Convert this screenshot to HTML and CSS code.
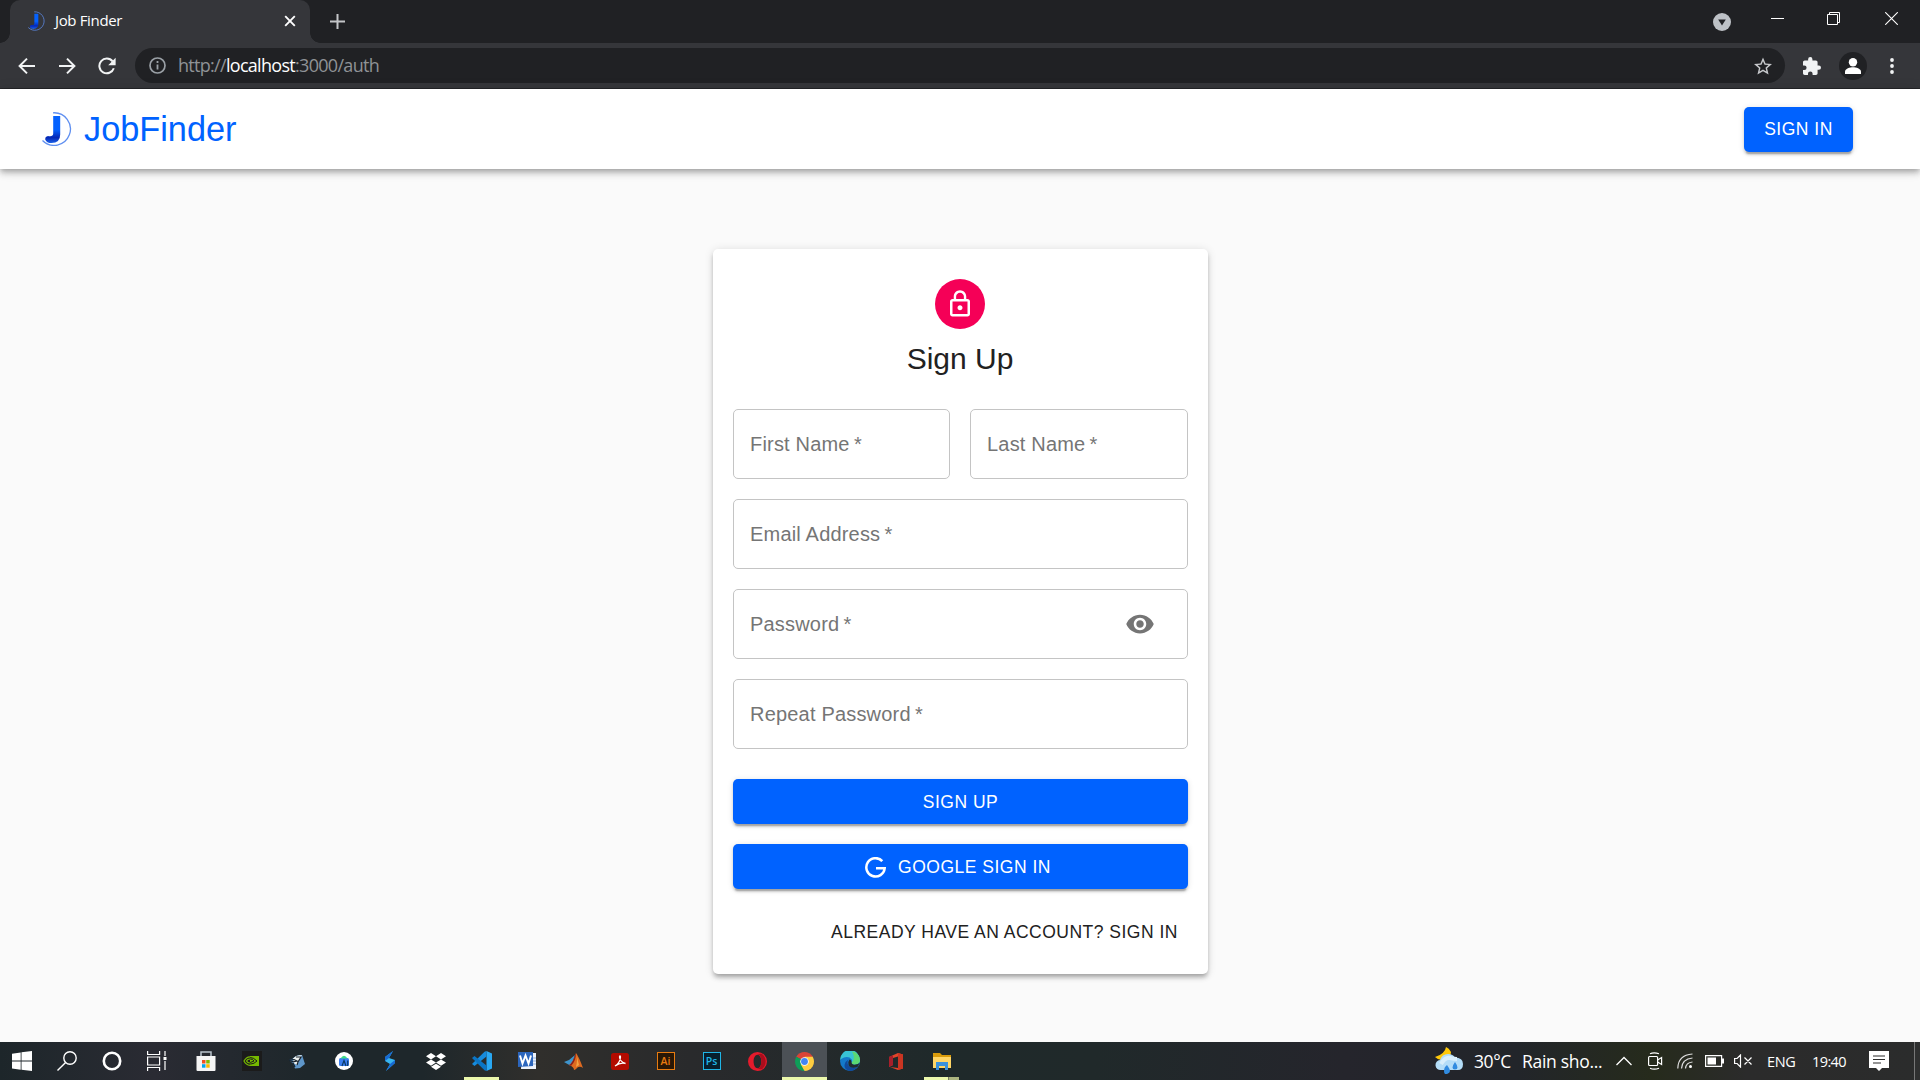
FILE: index.html
```html
<!DOCTYPE html>
<html lang="en">
<head>
<meta charset="utf-8">
<title>Job Finder</title>
<link rel="stylesheet" href="styles.css">
</head>
<body>
<svg width="0" height="0" class="defs">
  <defs>
    <linearGradient id="jg" x1="0" y1="0" x2="0" y2="1"><stop offset=".5" stop-color="#0562ff"/><stop offset=".8" stop-color="#0527b5"/><stop offset="1" stop-color="#1c62e8"/></linearGradient>
    <symbol id="logo" viewBox="0 0 30 34">
      <path d="M11 .8A16.300 16.300 0 1 1 .5 28.500" fill="none" stroke="#5f8ff0" stroke-width="1.300"/>
      <path d="M11.200 4h7v18.500q0 8.500-8.700 8.500-5 0-6.300-3.600 0-2.900 2.800-3.400 5.200 1 5.200-2.500z" fill="url(#jg)"/>
    </symbol>
  </defs>
</svg>

<div class="tabs">
  <div class="tab">
    <svg class="fav" width="17" height="20"><use href="#logo"/></svg>
    <span class="tab-title">Job Finder</span>
    <svg width="12" height="12" viewBox="0 0 12 12"><path d="M1.2 1.2l9.6 9.6M10.8 1.2L1.2 10.8" stroke="#fff" stroke-width="1.9"/></svg>
  </div>
  <svg class="plus" width="15" height="15" viewBox="0 0 15 15"><path d="M7.5 0v15M0 7.5h15" stroke="#c3c5c8" stroke-width="2"/></svg>
  <div class="window-buttons">
    <svg class="down" width="18" height="18" viewBox="0 0 18 18"><circle cx="9" cy="9" r="9" fill="#bdc1c6"/><path d="M5.2 6.5h7.6L9 12.6z" fill="#202124"/></svg>
    <svg class="min" width="13" height="13" viewBox="0 0 13 13"><path d="M0 6.5h13" stroke="#fff"/></svg>
    <svg class="max" width="13" height="13" viewBox="0 0 13 13" fill="none" stroke="#fff"><path d="M.5 2.5h10v10H.5zM2.5 2V.5h10v10H11"/></svg>
    <svg width="13" height="13" viewBox="0 0 13 13"><path d="M.2.2l12.6 12.6M12.8.2L.2 12.8" stroke="#fff" stroke-width="1.1"/></svg>
  </div>
</div>

<div class="toolbar">
  <svg class="nav" width="18" height="18" viewBox="0 0 18 18" fill="none" stroke="#f1f3f4" stroke-width="2"><path d="M17 9H2.5M9 1.6L1.6 9 9 16.4"/></svg>
  <svg class="nav" width="18" height="18" viewBox="0 0 18 18" fill="none" stroke="#f1f3f4" stroke-width="2"><path d="M1 9h14.5M9 1.6L16.4 9 9 16.4"/></svg>
  <svg class="nav" width="18" height="18" viewBox="0 0 18 18"><path d="M15.800 11.200A7.400 7.400 0 1 1 14.600 4.300" fill="none" stroke="#f1f3f4" stroke-width="2"/><path d="M17.600.8v7.400h-7.400z" fill="#f1f3f4"/></svg>
  <div class="omnibox">
    <svg width="17" height="17" viewBox="0 0 17 17"><circle cx="8.500" cy="8.500" r="7.500" fill="none" stroke="#9aa0a6" stroke-width="1.7"/><path d="M8.500 7.500v5M8.500 4v2" stroke="#9aa0a6" stroke-width="1.8"/></svg>
    <span class="url">http://<b>localhost</b>:3000/auth</span>
    <svg width="18" height="18" viewBox="2 2 20 19"><path fill="#c6c8cb" d="M22 9.240l-7.190-.620L12 2 9.190 8.630 2 9.240l5.460 4.730L5.820 21 12 17.270 18.180 21l-1.630-7.030L22 9.240zM12 15.400l-3.760 2.270 1-4.280-3.320-2.880 4.380-.380L12 6.100l1.710 4.040 4.380.380-3.320 2.880 1 4.280L12 15.400z"/></svg>
  </div>
  <svg class="ext" width="18" height="18" viewBox="2 1 21 21"><path fill="#f1f3f4" d="M20.500 11H19V7c0-1.100-.9-2-2-2h-4V3.500a2.500 2.500 0 0 0-5 0V5H4c-1.100 0-2 .9-2 2v3.800h1.500a2.700 2.700 0 0 1 0 5.400H2V20c0 1.100.9 2 2 2h3.800v-1.500a2.700 2.700 0 0 1 5.400 0V22H17c1.100 0 2-.9 2-2v-4h1.500a2.500 2.500 0 0 0 0-5z"/></svg>
  <svg class="user" width="28" height="28" viewBox="0 0 28 28"><circle cx="14" cy="14" r="14" fill="#202124"/><circle cx="14" cy="10.200" r="4.200" fill="#fff"/><path d="M6 22v-2.500c0-2.700 5-4.200 8-4.200s8 1.500 8 4.200V22z" fill="#fff"/></svg>
  <svg width="4" height="16" viewBox="0 0 4 16" fill="#f1f3f4"><circle cx="2" cy="2" r="1.900"/><circle cx="2" cy="8" r="1.900"/><circle cx="2" cy="14" r="1.900"/></svg>
</div>

<header class="appbar">
  <svg width="30" height="34"><use href="#logo"/></svg>
  <span class="brand">JobFinder</span>
  <button class="btn signin">SIGN IN</button>
</header>

<main class="page">
  <form class="card">
    <div class="avatar"><svg width="30" height="30" viewBox="0 0 24 24" fill="#fff"><path d="M12 17c1.100 0 2-.9 2-2s-.9-2-2-2-2 .9-2 2 .9 2 2 2zm6-9h-1V6c0-2.760-2.240-5-5-5S7 3.240 7 6v2H6c-1.100 0-2 .9-2 2v10c0 1.100.9 2 2 2h12c1.100 0 2-.9 2-2V10c0-1.100-.9-2-2-2zM8.900 6c0-1.710 1.390-3.100 3.100-3.100s3.100 1.390 3.100 3.100v2H8.900V6zM18 20H6V10h12v10z"/></svg></div>
    <h1>Sign Up</h1>
    <div class="fields">
      <label class="field">First Name&thinsp;*</label>
      <label class="field">Last Name&thinsp;*</label>
      <label class="field wide">Email Address&thinsp;*</label>
      <label class="field wide">Password&thinsp;*
        <svg width="30" height="30" viewBox="0 0 24 24"><path fill="#757575" d="M12 4.500C7 4.500 2.730 7.610 1 12c1.730 4.390 6 7.500 11 7.500s9.270-3.110 11-7.500c-1.730-4.390-6-7.500-11-7.500zM12 17c-2.760 0-5-2.240-5-5s2.240-5 5-5 5 2.240 5 5-2.240 5-5 5zm0-8c-1.660 0-3 1.340-3 3s1.340 3 3 3 3-1.340 3-3-1.340-3-3-3z"/></svg>
      </label>
      <label class="field wide">Repeat Password&thinsp;*</label>
    </div>
    <button class="btn submit">SIGN UP</button>
    <button class="btn google"><svg width="21" height="21" viewBox="0 0 21 21"><path d="M17.300 4.100A9.200 9.200 0 1 0 19.700 11.200H11" fill="none" stroke="#fff" stroke-width="2.500"/></svg>GOOGLE SIGN IN</button>
    <a class="switch">ALREADY HAVE AN ACCOUNT? SIGN IN</a>
  </form>
</main>

<footer class="taskbar">
  <div class="sys"><svg width="20" height="20" viewBox="0 0 20 20" fill="#fff"><path d="M0 2.700L8.700 1.400v8.200H0zM9.500 1.300L20 0v9.600H9.500zM0 10.400h8.700v8.300L0 17.500zM9.500 10.400H20V20L9.500 18.800z"/></svg></div>
  <div class="sys"><svg width="20" height="20" viewBox="0 0 20 20" fill="none" stroke="#fff" stroke-width="1.400"><circle cx="13" cy="7" r="6.200"/><path d="M8.600 11.400L.5 19.500"/></svg></div>
  <div class="sys"><svg width="20" height="20" viewBox="0 0 20 20"><circle cx="10" cy="10" r="8.200" fill="none" stroke="#fff" stroke-width="2.600"/></svg></div>
  <div class="sys"><svg width="20" height="20" viewBox="0 0 20 20" fill="none" stroke="#fff" stroke-width="1.200"><path d="M.6 0v3.500h12V0M.6 20v-3.500h12V20M.6 6h12v8H.6zM18 0v5M18 10v9"/><path d="M16.500 6h3v3h-3z" fill="#fff" stroke="none"/></svg></div>
  <div class="apps">
    <div class="app"><svg width="20" height="20" viewBox="0 0 20 20"><path d="M5 6V1h10v5" fill="none" stroke="#b9c3cc" stroke-width="1.500"/><path d="M.5 5h19v14q0 1-1 1h-17q-1 0-1-1z" fill="#f5f5f5"/><path d="M6 9h3.500v3.500H6z" fill="#f25022"/><path d="M10.200 9h3.500v3.500h-3.500z" fill="#7fba00"/><path d="M6 13.200h3.500v3.500H6z" fill="#00a4ef"/><path d="M10.200 13.200h3.500v3.500h-3.500z" fill="#ffb900"/></svg></div>
    <div class="app"><svg width="20" height="20" viewBox="0 0 20 20"><path fill="#1b1b1b" d="M0 0h20v20H0z"/><path fill="#76b900" d="M8 5h9v10H8z"/><path d="M2 10q6-7 13 0-6 6-13 0zM5 10q4-4 7 0-4 3-7 0" fill="none" stroke="#1b1b1b" stroke-width="1"/><path d="M8 5.800Q4 6 2 10q2 4 6 4.400M8 8Q5.500 8 4.500 10q1 2 3.500 2" fill="none" stroke="#76b900" stroke-width="1.200"/></svg></div>
    <div class="app"><svg width="17" height="15" viewBox="0 0 17 15"><path d="M0 6l4-1.500Q7 .5 13 1l3 9-5 4-5 .500-2-5z" fill="#5e96c9"/><path d="M4 4.500Q8 0 13 1.500L10.500 6 8 11 4.500 9z" fill="#eef1ee"/><path d="M0 6l5-.5 3 1.500-4 .8zM7 3l5 0-3 5-1 3M4 9l2 4" fill="none" stroke="#15202b" stroke-width="1.200"/></svg></div>
    <div class="app"><svg width="18" height="18" viewBox="0 0 18 18"><circle cx="9" cy="9" r="9" fill="#fff"/><rect x="4" y="6" width="10" height="8" rx="1.500" fill="#3b7ff0"/><path d="M5.500 6.500Q9 .8 12.500 6.500z" fill="#3ddc84"/><path d="M7 14l2-5.500 2 5.500M12.700 8.500V14" fill="none" stroke="#0b3a66" stroke-width="1.200"/></svg></div>
    <div class="app"><svg width="12" height="20" viewBox="0 0 12 20"><path d="M9 0L1 6v4l5 3-4 7 9-8V9L5 7z" fill="#38b5ef"/><path d="M9 0L1 6v4l4-3zM11 9v3l-9 8 4-7z" fill="#1769d2"/></svg></div>
    <div class="app"><svg width="20" height="17" viewBox="0 0 20 17" fill="#fff"><path d="M5 0l5 3.200-5 3.200-5-3.200zM15 0l5 3.200-5 3.200-5-3.200zM5 6.400l5 3.200-5 3.200-5-3.200zM15 6.400l5 3.200-5 3.200-5-3.200zM10 10.800l5 3-5 3.200-5-3.200z"/></svg></div>
    <div class="app running"><svg width="20" height="20" viewBox="0 0 20 20"><path d="M14.500 0L20 2.500v15L14.500 20z" fill="#29a8f3"/><path d="M14.500 0v5.500L2.500 15 0 13 12.500.8z" fill="#168bdc"/><path d="M14.500 20v-5.500L2.500 5 0 7l12.500 12.200z" fill="#0b75c5"/></svg></div>
    <div class="app"><svg width="19" height="18" viewBox="0 0 19 18"><path fill="#eef3fb" d="M4 1h14v16H3z"/><path d="M15 6h3M15 9h3M15 12h3" stroke="#8fb0de"/><path fill="#2c66bd" d="M0 0h15v14L0 15z"/><path d="M2 3.500l2.500 8 3-8 3 8 2.500-8" fill="none" stroke="#fff" stroke-width="1.900"/></svg></div>
    <div class="app"><svg width="19" height="17" viewBox="0 0 19 17"><path d="M0 9l5-2 6-5-4 11z" fill="#3e94cc"/><path d="M5 12q4-2 7-12 3 4 7 15-4-3-7 1-1 1-2 1 0-3-5-5z" fill="#de6a20"/><path d="M12 0q-3 10-7 12l2 1q5-5 5-13z" fill="#8b1f1a"/><path d="M12 0q2 6 0 14l3-2z" fill="#f4a443"/></svg></div>
    <div class="app"><svg width="18" height="17" viewBox="0 0 18 17"><rect width="18" height="17" rx="2.500" fill="#b30b00"/><path d="M4 13q5-3 5.500-9-.5-2-1 0 .5 5 6 6.500-5-1.500-10.500 2.500z" fill="none" stroke="#fff" stroke-width="1.300"/></svg></div>
    <div class="app"><span class="adobe ai">Ai</span></div>
    <div class="app"><span class="adobe ps">Ps</span></div>
    <div class="app"><svg width="19" height="19" viewBox="0 0 19 19"><path fill-rule="evenodd" d="M9.500 0a9.500 9.500 0 1 0 0 19 9.500 9.500 0 1 0 0-19zm0 2.800c2.300 0 3.800 3 3.800 6.700s-1.500 6.700-3.800 6.700-3.900-3-3.900-6.700 1.600-6.700 3.900-6.700z" fill="#e41b2c"/><path d="M9.500 2.800Q12 1 14 2a9.500 9.500 0 0 1 0 15q-2 1-4.500-.8 3.800-.2 3.800-6.700T9.500 2.800z" fill="#aa0d1c"/></svg></div>
    <div class="app active"><svg width="19" height="19" viewBox="0 0 20 20"><path d="M10 10L1.340 5A10 10 0 0 1 18.660 5z" fill="#db4437"/><path d="M10 10L18.660 5A10 10 0 0 1 10 20z" fill="#ffcd40"/><path d="M10 10v10A10 10 0 0 1 1.340 5z" fill="#0f9d58"/><path d="M10 5h8.700l-4.400 7.500zM14.300 12.500L10 20l-4-7z" fill="#ffcd40"/><path d="M5.500 12.300L1.300 5 10 10z" fill="#0f9d58"/><circle cx="10" cy="10" r="4.500" fill="#fff"/><circle cx="10" cy="10" r="3.600" fill="#4285f4"/></svg></div>
    <div class="app"><svg width="20" height="20" viewBox="0 0 20 20"><circle cx="10" cy="10" r="10" fill="#1479c9"/><path d="M0 9A10 10 0 0 1 20 9q0 4-4.500 4.500-4 .3-4-2 1-1.500.3-3Q9 5 4 6.500 1 7.500 0 9z" fill="#38c3d5"/><path d="M12 .2A10 10 0 0 1 20 9q0 4-4.500 4.500-4 .3-4-2Q16 8 12 .2z" fill="#5bd873"/><path d="M8.500 8.500q-2 3 0 6t9 1.500q-3 4-7.500 4-6-1-5.500-6 1-4 4-5.500z" fill="#114a9b"/><path d="M11.500 11q0 3 4 2.600 3 0 4-2-.4 2.400-2 4.400-7 2-9-2-1-3 1-5.500 2 0 2 2.500z" fill="#222b2f"/></svg></div>
    <div class="app"><svg width="14" height="17" viewBox="0 0 14 17"><path d="M0 4l9-4 5 1.500v14L9 17l-8-3 8 1V3.500L4 5v7l-4 2z" fill="#e2452a"/><path d="M0 4l4-1.800V12l-4 2z" fill="#a71f2b"/><path d="M9 0l5 1.500v14L9 17z" fill="#ca3522"/></svg></div>
    <div class="app running stacked"><svg width="18" height="17" viewBox="0 0 18 17"><path d="M0 0h7l2 2h9v4H0z" fill="#d99b0b"/><path d="M0 4h18v11H0z" fill="#ffd566"/><path d="M3 17V9h12v8h-3v-4H6v4z" fill="#3a91dc"/></svg></div>
  </div>
  <div class="tray">
    <svg class="weather" width="28" height="27" viewBox="0 0 28 27"><path d="M11 0q-1 7-11 10 4 4 9 3 7-2 7-8-2-4-5-5z" fill="#ffc90a"/><path d="M6 23a5 5 0 0 1-1-10q2-6 8-6 5 0 7 3.500 8 0 8 6.500t-6 6z" fill="#b4ddf8"/><path d="M6 17q4-7 9-6 4 1 7 1" fill="none" stroke="#d9effc" stroke-width="4"/><path d="M12 18q3 4 3 6t-3 3-3-3 3-6zM20 15q2.500 3.500 2.500 5.500T20 22.500t-2.500-2 2.500-5.500z" fill="#318be0"/></svg>
    <span class="temp">30°C</span><span class="rain">Rain sho...</span>
    <svg class="chev" width="16" height="10" viewBox="0 0 16 10"><path d="M.5 9L8 1.500 15.500 9" fill="none" stroke="#fff" stroke-width="1.300"/></svg>
    <svg class="meet" width="15" height="18" viewBox="0 0 15 18" fill="none" stroke="#fff" stroke-width="1.200"><rect x=".6" y="4.500" width="9" height="9" rx="1"/><path d="M9.600 8l4-2.500v7l-4-2.500M2 1.800Q6 0 11 1.800M2 16.200q4 1.800 9 0"/></svg>
    <svg class="wifi" width="16" height="16" viewBox="0 0 16 16" fill="none" stroke="#ddd" stroke-width="1.200"><path d="M.8 15.500Q1 2 15.500 1M4.500 15.500Q5 6 15.500 5M8.500 15.500Q9 9.500 15.500 9"/><circle cx="13.500" cy="13.500" r="1.500" fill="#fff" stroke="none"/></svg>
    <svg class="batt" width="19" height="12" viewBox="0 0 19 12"><path d="M.6.600h16v10.800H.6z" fill="none" stroke="#fff" stroke-width="1.200"/><path d="M2.500 2.500H11v7H2.500zM17 3.500h2v5h-2z" fill="#fff"/></svg>
    <svg class="vol" width="18" height="14" viewBox="0 0 18 14" fill="none" stroke="#fff" stroke-width="1.200"><path d="M.6 4.500h2.500L6.500 1v12L3.100 9.500H.6zM10.500 3.500l7 7M17.500 3.500l-7 7"/></svg>
    <span class="lang">ENG</span><span class="clock">19:40</span>
    <svg class="note" width="20" height="20" viewBox="0 0 20 20"><path d="M0 0h20v17h-7l-3 3-3-3H0z" fill="#fff"/><path d="M4 5h12M4 8.500h12M4 12h8" stroke="#2c2c2c" stroke-width="1.200"/></svg>
  </div>
</footer>
</body>
</html>
```

FILE: styles.css
```css
* { box-sizing: border-box; }
body { margin: 0; width: 1920px; height: 1080px; overflow: hidden; display: flex; flex-direction: column; background: #fafafa; font-family: "Liberation Sans", Arial, sans-serif; }
svg { display: block; flex: none; }
.defs { position: absolute; }

.tabs { flex: none; height: 43px; background: #202124; display: flex; padding-left: 10px; font-family: "Open Sans", sans-serif; }
.tab { position: relative; width: 300px; background: #35363a; border-radius: 10px 10px 0 0; display: flex; align-items: center; padding: 0 14px 1px 18px; }
.tab::before, .tab::after { content: ""; position: absolute; bottom: 0; width: 10px; height: 10px; }
.tab::before { left: -10px; background: radial-gradient(circle at 0 0, #202124 9.5px, #35363a 10px); }
.tab::after { right: -10px; background: radial-gradient(circle at 100% 0, #202124 9.5px, #35363a 10px); }
.tab-title { flex: 1; margin-left: 10px; padding-bottom: 2px; color: #fff; font-size: 15px; letter-spacing: -.35px; }
.plus { margin: 14px 0 0 20px; }
.window-buttons { margin-left: auto; display: flex; padding: 12px 22px 0 0; }
.down { margin: 1px 40px 0 0; }
.min { margin-right: 43px; }
.max { margin-right: 45px; }

.toolbar { flex: none; height: 46px; background: #35363a; border-bottom: 1px solid #242528; display: flex; align-items: center; padding: 0 26px 0 18px; }
.nav { margin-right: 22px; }
.omnibox { flex: 1; height: 35px; border-radius: 18px; background: #202124; display: flex; align-items: center; padding: 0 13px 0 14px; margin: 0 18px 0 -3px; }
.url { flex: 1; margin-left: 12px; padding-bottom: 1px; color: #8f9296; font: 18px "Open Sans", sans-serif; letter-spacing: -.7px; }
.url b { font-weight: 400; color: #fff; }
.user { margin: 0 23px 0 18px; }

.appbar { flex: none; position: relative; height: 80px; background: #fff; display: flex; align-items: center; padding: 0 67px 0 42px; box-shadow: 0 2.5px 5px -1px rgba(0,0,0,.2), 0 5px 6px rgba(0,0,0,.14), 0 1px 12.5px rgba(0,0,0,.12); }
.brand { margin-left: 12px; font-size: 34.3px; color: #0062ff; }
.btn { border: 0; border-radius: 5px; height: 45px; padding: 0; background: #0062ff; color: #fff; font: 500 17.5px "Liberation Sans", Arial, sans-serif; letter-spacing: .5px; box-shadow: 0 3.75px 1.25px -2.5px rgba(0,0,0,.2), 0 2.5px 2.5px rgba(0,0,0,.14), 0 1px 6px rgba(0,0,0,.12); }
.signin { margin-left: auto; width: 109px; }

.page { flex: 1; display: flex; justify-content: center; align-items: flex-start; padding: 80px 0 0 1px; }
.card { width: 495px; height: 725px; padding: 30px 20px; background: #fff; border-radius: 5px; display: flex; flex-direction: column; box-shadow: 0 4px 4px -2.5px rgba(0,0,0,.2), 0 4px 5px rgba(0,0,0,.14), 0 1px 10px rgba(0,0,0,.12); }
.avatar { align-self: center; width: 50px; height: 50px; margin-right: 1px; border-radius: 50%; background: #f50057; display: grid; place-items: center; }
.card h1 { margin: 10px 1px 30px 0; text-align: center; font-size: 30px; font-weight: 400; line-height: 40px; color: #212121; }
.fields { display: grid; grid-template-columns: 217px 218px; gap: 20px; }
.field { height: 70px; border: 1px solid #c4c4c4; border-radius: 5px; padding: 0 32px 0 16px; display: flex; align-items: center; justify-content: space-between; font-size: 20px; letter-spacing: .19px; color: #757575; }
.wide { grid-column: 1 / -1; }
.submit { margin-top: 30px; padding-top: 1px; }
.google { margin-top: 20px; display: flex; align-items: center; justify-content: center; gap: 12px; padding: 1px 5px 0 0; }
.switch { margin: 32px 10px 0; text-align: right; font-size: 17.5px; line-height: 22px; letter-spacing: .5px; color: #212121; }

.taskbar { flex: none; height: 38px; display: flex; color: #fff; font-family: "Open Sans", sans-serif; background: linear-gradient(90deg, #1d262a, #2a2b33 8%, #1e272b 16%, #1e272b 22%, #302f2c 28%, #292a2c 36%, #1f292a 49%, #20292a 57%, #25252c 70%, #22252a 79%, #262b1c 86%, #2b2b2b 91%, #2b2c2c); }
.sys { width: 45px; display: grid; place-items: center; padding-right: 1px; }
.apps { display: flex; margin-left: 3px; }
.app { position: relative; width: 46px; display: grid; place-items: center; padding-right: 1px; }
.running::after, .active::after { content: ""; position: absolute; left: 5px; right: 6px; bottom: 0; height: 3px; background: #ecf8ac; }
.active { background: linear-gradient(#4c5156, #4c5156) left 1px top / 45px 100% no-repeat; padding-right: 0; }
.active::after { left: 1px; right: 0; }
.stacked::after { background: linear-gradient(90deg, #ecf8ac 24px, #777c62 24px, #777c62 25px, #acb580 25px); }
.adobe { width: 18px; height: 18px; border: 1px solid; font-size: 10.5px; line-height: 16px; text-align: center; font-weight: 600; }
.ai { color: #e87b10; background: #291705; }
.ps { color: #20b5e5; background: #07202e; }
.tray { margin-left: auto; display: flex; align-items: center; white-space: nowrap; padding-right: 26px; border-right: 5px solid #2f3030; box-shadow: inset -1px 0 #777; }
.weather { margin-bottom: 1px; }
.temp { width: 48px; margin-left: 11px; font-size: 17.5px; letter-spacing: -.4px; }
.rain { width: 83px; font-size: 17.5px; letter-spacing: -.3px; }
.chev { margin-left: 11px; }
.meet { margin-left: 16px; }
.wifi { margin-left: 14px; }
.batt { margin-left: 12px; }
.vol { margin-left: 10px; }
.lang { width: 30px; margin-left: 15px; font-size: 14.5px; letter-spacing: -.4px; }
.clock { width: 36px; margin-left: 15px; font-size: 14.5px; letter-spacing: -.6px; }
.note { margin-left: 21px; }
```
